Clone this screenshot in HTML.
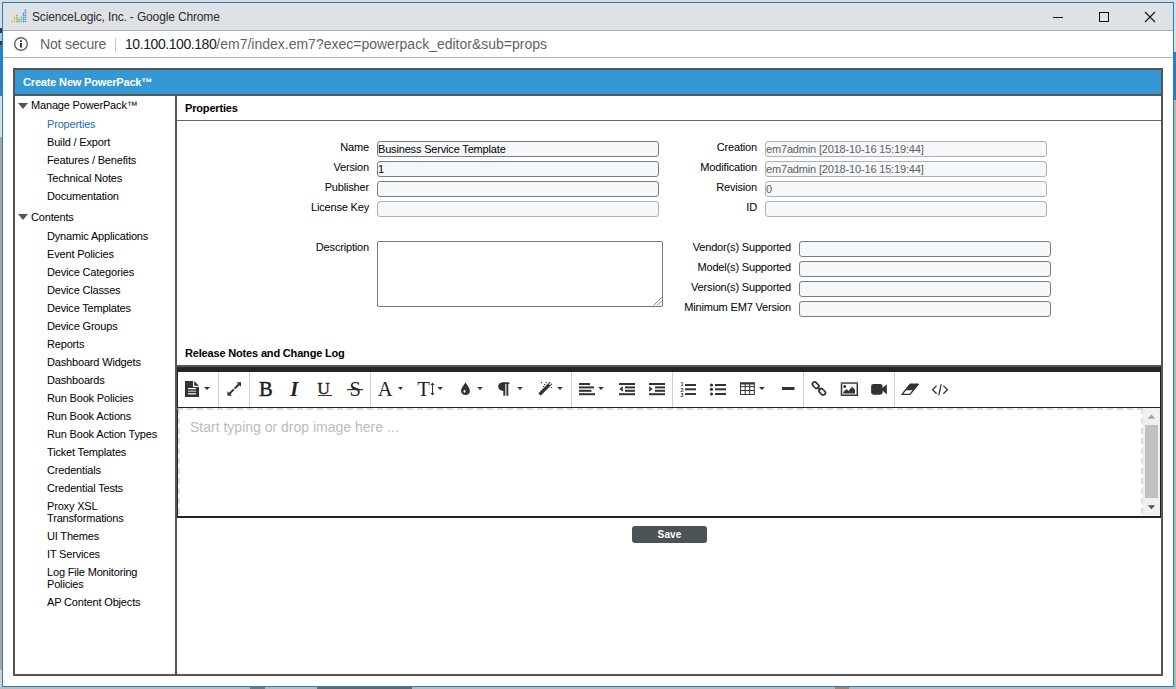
<!DOCTYPE html>
<html><head><meta charset="utf-8">
<style>
*{box-sizing:border-box;margin:0;padding:0}
html,body{width:1176px;height:689px;overflow:hidden}
body{position:relative;background:#c8c8c8;font-family:"Liberation Sans",sans-serif;font-size:11px;color:#000}
.a{position:absolute}
.t{position:absolute;white-space:nowrap;line-height:12px;font-size:11px;letter-spacing:-0.17px}
.r{text-align:right}
.b{font-weight:bold}
.inp{position:absolute;height:16px;border:1px solid #7c7c7c;border-radius:3px;background:#f5f8fa}
.dis{border-color:#b0b0b0}
.itxt{position:absolute;left:0px;top:1px;line-height:12px;font-size:11px;letter-spacing:-0.17px;white-space:nowrap}
.tri{position:absolute;width:0;height:0;border-left:5px solid transparent;border-right:5px solid transparent;border-top:6px solid #555}
.sep{position:absolute;top:372px;width:1px;height:35px;background:#d0d0d0}
.ic{position:absolute}
</style></head><body>
<!-- outside strips -->
<div class="a" style="left:0;top:0;width:1176px;height:2px;background:#dedad6"></div>
<div class="a" style="left:0;top:0;width:2px;height:28px;background:#dcdcdc"></div>
<div class="a" style="left:0;top:28px;width:2px;height:17px;background:#3a3a3a"></div>
<div class="a" style="left:0;top:33px;width:2px;height:8px;background:#a9c6de"></div>
<div class="a" style="left:0;top:45px;width:2px;height:51px;background:#2f80c0"></div>
<div class="a" style="left:0;top:96px;width:2px;height:41px;background:#dcdcdc"></div>
<div class="a" style="left:0;top:137px;width:2px;height:533px;background:#a8a4a2"></div>
<div class="a" style="left:0;top:670px;width:2px;height:19px;background:#d0d0d0"></div>
<div class="a" style="left:1174px;top:0;width:2px;height:52px;background:#dedede"></div>
<div class="a" style="left:1174px;top:52px;width:2px;height:48px;background:#2f7fbf"></div>
<div class="a" style="left:1174px;top:100px;width:2px;height:589px;background:#b4b4b4"></div>
<div class="a" style="left:0;top:687px;width:1176px;height:2px;background:#bdb9b7"></div>
<div class="a" style="left:250px;top:687px;width:15px;height:2px;background:#777"></div>
<div class="a" style="left:317px;top:687px;width:95px;height:2px;background:#666"></div>
<div class="a" style="left:835px;top:687px;width:14px;height:2px;background:#b08060"></div>
<!-- window -->
<div class="a" style="left:2px;top:2px;width:1172px;height:685px;border:1px solid #1883d7;background:#fff"></div>
<div class="a" style="left:3px;top:3px;width:1170px;height:27px;background:#dee1e6"></div>
<div class="a" style="left:3px;top:30px;width:1170px;height:1px;background:#a9abae"></div>
<div class="a" style="left:3px;top:57px;width:1170px;height:1px;background:#b8b8b8"></div>

<!-- title -->
<svg class="a" style="left:0;top:0" width="30" height="30" viewBox="0 0 30 30"><rect x="11.40" y="20.70" width="1.8" height="1.6" rx="0.7" fill="#f5b10f" opacity="1"/><rect x="13.70" y="16.70" width="1.6" height="1.6" rx="0.7" fill="#f5b10f" opacity="1"/><rect x="13.70" y="18.70" width="1.6" height="1.6" rx="0.7" fill="#f5b10f" opacity="1"/><rect x="13.70" y="20.70" width="1.6" height="1.6" rx="0.7" fill="#f5b10f" opacity="1"/><rect x="15.80" y="14.70" width="2.2" height="1.4" rx="0.7" fill="#6cbb5a" opacity="0.8"/><rect x="15.80" y="16.80" width="2.2" height="1.4" rx="0.7" fill="#6cbb5a" opacity="0.8"/><rect x="15.8" y="18.8" width="4.6" height="1.4" rx="0.6" fill="#6cbb5a" opacity="0.75"/><rect x="15.8" y="20.8" width="4.6" height="1.4" rx="0.6" fill="#6cbb5a" opacity="0.75"/><rect x="20.55" y="16.70" width="1.6" height="1.6" rx="0.7" fill="#6cbb5a" opacity="1"/><rect x="20.55" y="18.70" width="1.6" height="1.6" rx="0.7" fill="#6cbb5a" opacity="1"/><rect x="20.55" y="20.70" width="1.6" height="1.6" rx="0.7" fill="#6cbb5a" opacity="1"/><rect x="22.70" y="12.70" width="1.6" height="1.6" rx="0.7" fill="#3b8fd6" opacity="1"/><rect x="22.70" y="14.60" width="1.6" height="1.6" rx="0.7" fill="#3b8fd6" opacity="1"/><rect x="22.70" y="16.70" width="1.6" height="1.6" rx="0.7" fill="#3b8fd6" opacity="1"/><rect x="22.70" y="18.70" width="1.6" height="1.6" rx="0.7" fill="#3b8fd6" opacity="1"/><rect x="22.70" y="20.70" width="1.6" height="1.6" rx="0.7" fill="#3b8fd6" opacity="1"/><rect x="24.7" y="9" width="1.5" height="5" rx="0.7" fill="#3b8fd6" opacity="0.75"/><rect x="24.65" y="14.60" width="1.6" height="1.6" rx="0.7" fill="#3b8fd6" opacity="1"/><rect x="24.65" y="16.70" width="1.6" height="1.6" rx="0.7" fill="#3b8fd6" opacity="1"/><rect x="24.65" y="18.70" width="1.6" height="1.6" rx="0.7" fill="#3b8fd6" opacity="1"/><rect x="24.65" y="20.70" width="1.6" height="1.6" rx="0.7" fill="#3b8fd6" opacity="1"/></svg>
<div class="a" style="left:32px;top:10px;font-size:12px;line-height:14px;color:#2b2b2b;white-space:nowrap;letter-spacing:-0.15px">ScienceLogic, Inc. - Google Chrome</div>
<!-- window controls -->
<div class="a" style="left:1053px;top:17px;width:10px;height:1px;background:#111"></div>
<div class="a" style="left:1099px;top:12px;width:10px;height:10px;border:1px solid #111"></div>
<svg class="a" style="left:1144px;top:11px" width="12" height="12" viewBox="0 0 12 12"><path d="M1 1L11 11M11 1L1 11" stroke="#111" stroke-width="1.1"/></svg>

<!-- address bar -->
<svg class="a" style="left:13px;top:36px" width="16" height="16" viewBox="0 0 16 16"><circle cx="8" cy="8" r="6.3" fill="none" stroke="#5f6368" stroke-width="1.4"/><rect x="7" y="7" width="2" height="4.6" fill="#3c3c3c"/><rect x="7" y="4.3" width="2" height="1.8" fill="#3c3c3c"/></svg>
<div class="a" style="left:40px;top:36px;font-size:14px;line-height:16px;color:#5f6368;white-space:nowrap;letter-spacing:-0.15px">Not secure</div>
<div class="a" style="left:115px;top:38px;width:1px;height:14px;background:#c4c4c4"></div>
<div class="a" style="left:125px;top:36px;font-size:14px;line-height:16px;color:#5f6368;white-space:nowrap;letter-spacing:0px"><span style="color:#202124;letter-spacing:-0.43px">10.100.100.180</span>/em7/index.em7?exec=powerpack_editor&amp;sub=props</div>

<!-- dialog -->
<div class="a" style="left:13px;top:68px;width:1150px;height:608px;border:2px solid #555"></div>
<div class="a" style="left:15px;top:70px;width:1146px;height:24px;background:#3498d5"></div>
<div class="a" style="left:15px;top:94px;width:1146px;height:2px;background:#555"></div>
<div class="t b" style="left:23px;top:76px;color:#fff">Create New PowerPack™</div>
<div class="a" style="left:175px;top:96px;width:2px;height:578px;background:#555"></div>

<!-- sidebar -->
<div class="tri" style="left:18px;top:103px"></div>
<div class="t" style="left:31px;top:99px">Manage PowerPack™</div>
<div class="t" style="left:47px;top:118px;color:#1e6cb2">Properties</div>
<div class="t" style="left:47px;top:136px">Build / Export</div>
<div class="t" style="left:47px;top:154px">Features / Benefits</div>
<div class="t" style="left:47px;top:172px">Technical Notes</div>
<div class="t" style="left:47px;top:190px">Documentation</div>
<div class="tri" style="left:18px;top:214px"></div>
<div class="t" style="left:31px;top:211px">Contents</div>
<div class="t" style="left:47px;top:230px">Dynamic Applications</div>
<div class="t" style="left:47px;top:248px">Event Policies</div>
<div class="t" style="left:47px;top:266px">Device Categories</div>
<div class="t" style="left:47px;top:284px">Device Classes</div>
<div class="t" style="left:47px;top:302px">Device Templates</div>
<div class="t" style="left:47px;top:320px">Device Groups</div>
<div class="t" style="left:47px;top:338px">Reports</div>
<div class="t" style="left:47px;top:356px">Dashboard Widgets</div>
<div class="t" style="left:47px;top:374px">Dashboards</div>
<div class="t" style="left:47px;top:392px">Run Book Policies</div>
<div class="t" style="left:47px;top:410px">Run Book Actions</div>
<div class="t" style="left:47px;top:428px">Run Book Action Types</div>
<div class="t" style="left:47px;top:446px">Ticket Templates</div>
<div class="t" style="left:47px;top:464px">Credentials</div>
<div class="t" style="left:47px;top:482px">Credential Tests</div>
<div class="t" style="left:47px;top:500px">Proxy XSL<br>Transformations</div>
<div class="t" style="left:47px;top:530px">UI Themes</div>
<div class="t" style="left:47px;top:548px">IT Services</div>
<div class="t" style="left:47px;top:566px">Log File Monitoring<br>Policies</div>
<div class="t" style="left:47px;top:596px">AP Content Objects</div>

<!-- main -->
<div class="t b" style="left:185px;top:102px">Properties</div>
<div class="a" style="left:177px;top:120px;width:984px;height:1px;background:#666"></div>

<div class="t r" style="left:269px;width:100px;top:141px">Name</div>
<div class="t r" style="left:269px;width:100px;top:161px">Version</div>
<div class="t r" style="left:269px;width:100px;top:181px">Publisher</div>
<div class="t r" style="left:269px;width:100px;top:201px">License Key</div>
<div class="t r" style="left:269px;width:100px;top:241px">Description</div>
<div class="inp" style="left:377px;top:141px;width:282px"><div class="itxt">Business Service Template</div></div>
<div class="inp" style="left:377px;top:161px;width:282px"><div class="itxt">1</div></div>
<div class="inp" style="left:377px;top:181px;width:282px"></div>
<div class="inp dis" style="left:377px;top:201px;width:282px"></div>
<div class="a" style="left:377px;top:241px;width:286px;height:66px;border:1px solid #777;border-radius:2px;background:#fff"></div>
<svg class="a" style="left:652px;top:296px" width="10" height="10" viewBox="0 0 10 10"><path d="M9.5 1.5L1.5 9.5M9.5 5L5 9.5" stroke="#888" stroke-width="1"/></svg>

<div class="t r" style="left:657px;width:100px;top:141px">Creation</div>
<div class="t r" style="left:657px;width:100px;top:161px">Modification</div>
<div class="t r" style="left:657px;width:100px;top:181px">Revision</div>
<div class="t r" style="left:657px;width:100px;top:201px">ID</div>
<div class="inp dis" style="left:765px;top:141px;width:282px"><div class="itxt" style="color:#606060">em7admin [2018-10-16 15:19:44]</div></div>
<div class="inp dis" style="left:765px;top:161px;width:282px"><div class="itxt" style="color:#606060">em7admin [2018-10-16 15:19:44]</div></div>
<div class="inp dis" style="left:765px;top:181px;width:282px"><div class="itxt" style="color:#606060">0</div></div>
<div class="inp dis" style="left:765px;top:201px;width:282px"></div>

<div class="t r" style="left:641px;width:150px;top:241px">Vendor(s) Supported</div>
<div class="t r" style="left:641px;width:150px;top:261px">Model(s) Supported</div>
<div class="t r" style="left:641px;width:150px;top:281px">Version(s) Supported</div>
<div class="t r" style="left:641px;width:150px;top:301px">Minimum EM7 Version</div>
<div class="inp" style="left:799px;top:241px;width:252px"></div>
<div class="inp" style="left:799px;top:261px;width:252px"></div>
<div class="inp" style="left:799px;top:281px;width:252px"></div>
<div class="inp" style="left:799px;top:301px;width:252px"></div>

<div class="t b" style="left:185px;top:347px">Release Notes and Change Log</div>
<div class="a" style="left:177px;top:365px;width:984px;height:2px;background:#555"></div>
<!-- editor -->
<div class="a" style="left:177px;top:367px;width:984px;height:151px;border:1px solid #222;border-top:5px solid #252525;border-bottom:2px solid #222;background:#fff"></div>
<div class="a" style="left:178px;top:407px;width:982px;height:1px;background:#222"></div>
<svg class="a" style="left:177px;top:407px" width="984" height="111" viewBox="177 407 984 111"><path d="M177 409H1142.5" stroke="#b0b0b0" stroke-width="1" stroke-dasharray="6 4" fill="none"/><path d="M179 408V516M1142 408V516" stroke="#d2d2d2" stroke-width="1.5" stroke-dasharray="6 4" fill="none"/></svg>
<div class="a" style="left:1143px;top:408px;width:17px;height:108px;background:#f0f0f0"></div>
<div class="a" style="left:1145px;top:425px;width:13px;height:73px;background:#c1c1c1"></div>
<svg class="a" style="left:1147px;top:414px" width="9" height="6"><path d="M0.8 4.8L4.5 0.6L8.2 4.8Z" fill="#a3a3a3"/></svg>
<svg class="a" style="left:1147px;top:505px" width="9" height="6"><path d="M0.8 0.3L8.2 0.3L4.5 4.3Z" fill="#505050"/></svg>
<div class="a" style="left:190px;top:419px;font-size:14px;line-height:16px;color:#bcbcbc;white-space:nowrap">Start typing or drop image here ...</div>

<div class="sep" style="left:218px"></div>
<div class="sep" style="left:249px"></div>
<div class="sep" style="left:370px"></div>
<div class="sep" style="left:571px"></div>
<div class="sep" style="left:672px"></div>
<div class="sep" style="left:803px"></div>
<div class="sep" style="left:894px"></div>

<svg class="a" style="left:177px;top:372px" width="984" height="35" viewBox="177 372 984 35">
<g fill="#333">
<path d="M185 381H193V387H199V397H185Z"/>
<path d="M194.2 381L199 385.8H194.2Z"/>
<path d="M204 387H210L207 390Z"/>
<path d="M398 387H403L400.5 390Z"/>
<path d="M437.5 387H443L440.2 390Z"/>
<path d="M477.2 387H482.8L480 390Z"/>
<path d="M517.2 387H522.8L520 390Z"/>
<path d="M557.2 387H562.8L560 390Z"/>
<path d="M598.2 387H603.8L601 390Z"/>
<path d="M759 387H764.8L761.9 390Z"/>
</g>
<g fill="#fff"><rect x="188" y="388" width="8" height="1.2"/><rect x="188" y="390.6" width="8" height="1.2" opacity=".7"/><rect x="188" y="393.2" width="8" height="1.2"/></g>
<g fill="#333"><path d="M236.4 382.2H241V386.8L239.4 385.2L235.3 389.3L233.9 387.9L238 383.8Z"/><path d="M232 395.8H227.4V391.2L229 392.8L233.1 388.7L234.5 390.1L230.4 394.2Z"/></g>
<g font-family="Liberation Serif" fill="#222">
<text x="258.9" y="396" font-size="20.5" stroke="#222" stroke-width="0.5">B</text>
<text x="290.3" y="396" font-size="20.5" font-style="italic" font-weight="bold">I</text>
<text x="317.3" y="393.5" font-size="17.5" stroke="#222" stroke-width="0.35">U</text>
<text x="349.5" y="396" font-size="20.5">S</text>
<text x="377.7" y="396" font-size="20.5">A</text>
<text x="417.3" y="396" font-size="20.5">T</text>
</g>
<rect x="318" y="395" width="14" height="1" fill="#333"/>
<rect x="347" y="389" width="16" height="1.2" fill="#333"/>
<path d="M509.3 382.2V384H508.3V395.8H506.4V384H505.3V395.8H503.3V390.7C500.5 390.7 498.2 389 498.2 386.4C498.2 383.8 500.5 382.2 503.3 382.2Z" fill="#333"/>
<path d="M432.5 383V395" stroke="#333" stroke-width="1"/>
<path d="M430.5 385L432.5 382.5L434.5 385ZM430.5 393L432.5 395.5L434.5 393Z" fill="#333"/>
<path d="M465.5 382C466.4 384.6 469.9 387.6 469.9 390.9C469.9 393.4 468 395 465.5 395C463 395 461.1 393.4 461.1 390.9C461.1 387.6 464.6 384.6 465.5 382Z" fill="#333"/>
<ellipse cx="464.5" cy="391.3" rx="0.9" ry="1.5" fill="#fff"/>
<path d="M539.5 394.5L551 383" stroke="#333" stroke-width="3.2" stroke-linecap="butt"/>
<path d="M549.3 384.7L551 383" stroke="#fff" stroke-width="1.4"/>
<g fill="#333"><rect x="541" y="382" width="1" height="1"/><rect x="544" y="384" width="1.2" height="1.2"/><rect x="546" y="382" width="1" height="1"/><rect x="543" y="386" width="1" height="1"/><rect x="551" y="387" width="1" height="1"/></g>
<g fill="#333">
<rect x="579" y="383" width="11" height="2"/><rect x="579" y="386.4" width="15" height="2"/><rect x="579" y="389.8" width="12.5" height="2"/><rect x="579" y="393.2" width="16" height="2"/>
<rect x="619" y="383" width="16" height="2"/><rect x="625" y="386.4" width="10" height="2"/><rect x="625" y="389.8" width="10" height="2"/><rect x="619" y="393.2" width="16" height="2"/>
<path d="M622.8 386.3V391.7L619.3 389Z"/>
<rect x="649" y="383" width="16" height="2"/><rect x="655" y="386.4" width="10" height="2"/><rect x="655" y="389.8" width="10" height="2"/><rect x="649" y="393.2" width="16" height="2"/>
<path d="M649.2 386.3V391.7L652.7 389Z"/>
<rect x="685" y="384" width="11" height="2"/><rect x="685" y="388.3" width="11" height="2"/><rect x="685" y="393" width="11" height="2"/>
<rect x="715" y="384" width="11" height="2"/><rect x="715" y="388.3" width="11" height="2"/><rect x="715" y="393" width="11" height="2"/>
<circle cx="711.5" cy="385" r="1.6"/><circle cx="711.5" cy="389.3" r="1.6"/><circle cx="711.5" cy="394" r="1.6"/>
<rect x="782" y="387" width="12.5" height="3"/>
</g>
<g font-family="Liberation Sans" font-size="5.5" fill="#333" font-weight="bold"><text x="680.5" y="386">1</text><text x="680.5" y="391.5">2</text><text x="680.5" y="396.8">3</text></g>
<g fill="none" stroke="#333">
<rect x="740.5" y="383" width="13.8" height="11.5" stroke-width="1"/>
<path d="M740.5 386.6H754.3M740.5 390.5H754.3M745.2 383V394.5M749.7 383V394.5" stroke-width="1"/>
</g>
<rect x="740" y="382.5" width="14.8" height="2" fill="#333"/>
<g fill="none" stroke="#333" stroke-width="1.7">
<rect x="812" y="383" width="7.2" height="4.4" rx="2.2" transform="rotate(45 815.6 385.2)"/>
<rect x="818.6" y="389.6" width="7.2" height="4.4" rx="2.2" transform="rotate(45 822.2 391.8)"/>
</g>
<path d="M817.3 386.9L820.5 390.1" stroke="#333" stroke-width="1.5"/>
<rect x="841.5" y="383.2" width="15.8" height="12" fill="none" stroke="#333" stroke-width="1.5"/>
<rect x="841" y="382.5" width="16.8" height="1.5" fill="#666"/>
<circle cx="844.7" cy="386.5" r="1.5" fill="#333"/>
<path d="M843.3 393.6V392L846.5 389L848.5 391L852 386.7L855 389.7V393.6Z" fill="#333"/>
<rect x="871.1" y="384" width="11.5" height="10.7" rx="2.4" fill="#333"/>
<path d="M881 389.3L886.9 384.3V394.5Z" fill="#333"/>
<path d="M910.2 384.2H918.2L910 394.4H902Z" fill="#fff" stroke="#333" stroke-width="1.4" stroke-linejoin="round"/>
<path d="M910.2 384.2H918.2L913.3 390.3H905.3Z" fill="#333"/>
<g fill="none" stroke="#333" stroke-width="1.3">
<path d="M936.6 385.6L932.6 389.7L936.6 393.8"/>
<path d="M943.4 385.6L947.4 389.7L943.4 393.8"/>
<path d="M938.7 395.4L941.2 384.3"/>
</g>
</svg>
<!-- save -->
<div class="a" style="left:632px;top:526px;width:75px;height:17px;border-radius:3px;background:#4b5356;color:#fff;font-weight:bold;font-size:10px;line-height:17px;text-align:center;letter-spacing:0.1px">Save</div>
</body></html>
